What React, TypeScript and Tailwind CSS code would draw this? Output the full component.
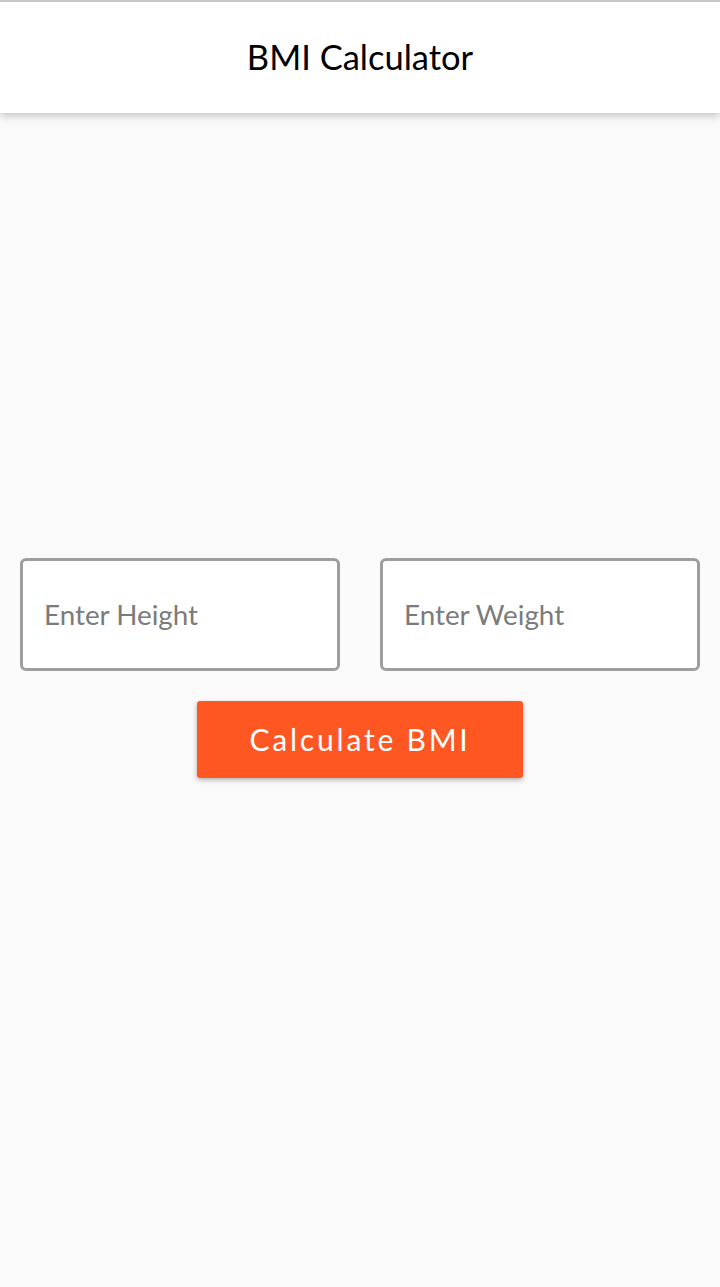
import React, { useState } from 'react';

const App: React.FC = () => {
  const [height, setHeight] = useState('');
  const [weight, setWeight] = useState('');

  return (
    <div className="min-h-[1287px] bg-[#fafafa] font-['Lato',sans-serif]">
      <header className="h-[113px] bg-white border-t-2 border-[#c8c8c8] flex items-center justify-center shadow-[0_3px_8px_rgba(0,0,0,0.22)] relative z-10">
        <h1 className="text-[34.5px] text-black leading-none -mt-[1px]">BMI Calculator</h1>
      </header>

      <main className="pt-[445px] flex flex-col items-center">
        <div className="w-full px-[20px] flex gap-[40px]">
          <input
            value={height}
            onChange={(e) => setHeight(e.target.value)}
            placeholder="Enter Height"
            className="flex-1 min-w-0 h-[113px] bg-white border-[3px] border-[#9e9e9e] rounded-[6px] px-[21px] text-[27.8px] text-black placeholder:text-[#7b7b7b] outline-none"
          />
          <input
            value={weight}
            onChange={(e) => setWeight(e.target.value)}
            placeholder="Enter Weight"
            className="flex-1 min-w-0 h-[113px] bg-white border-[3px] border-[#9e9e9e] rounded-[6px] px-[21px] text-[27.8px] text-black placeholder:text-[#7b7b7b] outline-none"
          />
        </div>
        <button className="mt-[30px] w-[326px] h-[77px] bg-[#ff5722] text-white text-[30px] tracking-[2.8px] rounded-[3px] shadow-[0_2px_5px_rgba(0,0,0,0.3)]">
          Calculate BMI
        </button>
      </main>
    </div>
  );
};

export default App;
